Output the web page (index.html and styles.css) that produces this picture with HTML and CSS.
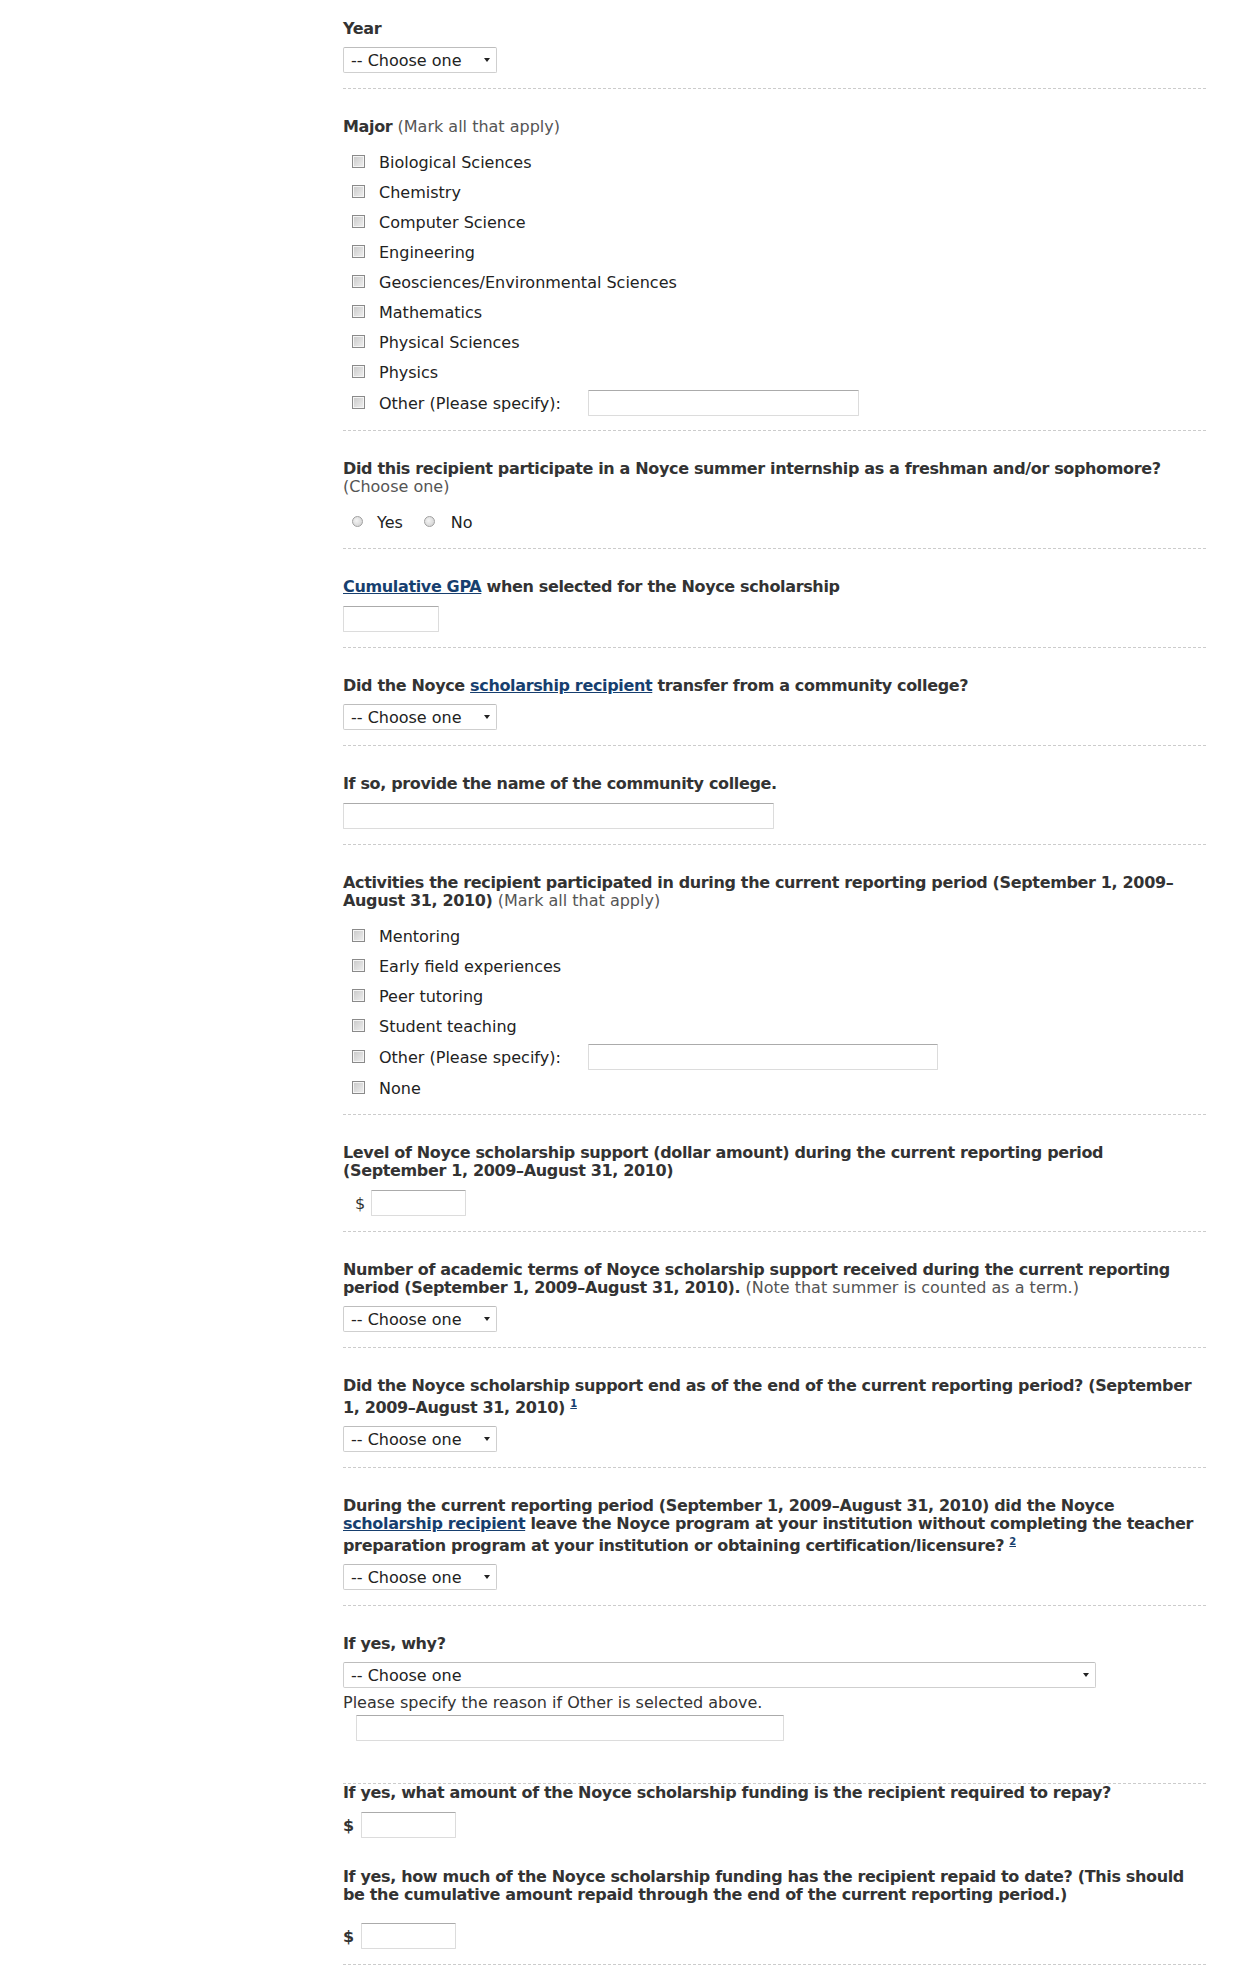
FILE: index.html
```html
<!DOCTYPE html>
<html lang="en">
<head>
  <meta charset="UTF-8">
  <title>Noyce scholarship recipient</title>
  <link rel="stylesheet" href="styles.css">
</head>
<body>
  <form class="survey">
    <div class="field first">
      <div class="label">Year</div>
      <div class="select"><select><option>-- Choose one</option></select></div>
    </div>

    <div class="field list">
      <div class="label">Major <span class="hint">(Mark all that apply)</span></div>
      <div class="options">
        <label class="option"><input type="checkbox"> Biological Sciences</label>
        <label class="option"><input type="checkbox"> Chemistry</label>
        <label class="option"><input type="checkbox"> Computer Science</label>
        <label class="option"><input type="checkbox"> Engineering</label>
        <label class="option"><input type="checkbox"> Geosciences/Environmental Sciences</label>
        <label class="option"><input type="checkbox"> Mathematics</label>
        <label class="option"><input type="checkbox"> Physical Sciences</label>
        <label class="option"><input type="checkbox"> Physics</label>
        <label class="option other"><input type="checkbox"> Other (Please specify): <input type="text" class="text major-other"></label>
      </div>
    </div>

    <div class="field list">
      <div class="label">Did this recipient participate in a Noyce summer internship as a freshman and/or sophomore?<br><span class="hint">(Choose one)</span></div>
      <div class="options">
        <div class="option radios">
          <label><input type="radio" name="intern"> Yes</label>
          <label><input type="radio" name="intern"> No</label>
        </div>
      </div>
    </div>

    <div class="field">
      <div class="label"><a href="#">Cumulative GPA</a> when selected for the Noyce scholarship</div>
      <input type="text" class="text gpa">
    </div>

    <div class="field">
      <div class="label">Did the Noyce <a href="#">scholarship recipient</a> transfer from a community college?</div>
      <div class="select"><select><option>-- Choose one</option></select></div>
    </div>

    <div class="field">
      <div class="label">If so, provide the name of the community college.</div>
      <input type="text" class="text college">
    </div>

    <div class="field list">
      <div class="label">Activities the recipient participated in during the current reporting period (September 1, 2009–August 31, 2010) <span class="hint">(Mark all that apply)</span></div>
      <div class="options">
        <label class="option"><input type="checkbox"> Mentoring</label>
        <label class="option"><input type="checkbox"> Early field experiences</label>
        <label class="option"><input type="checkbox"> Peer tutoring</label>
        <label class="option"><input type="checkbox"> Student teaching</label>
        <label class="option other"><input type="checkbox"> Other (Please specify): <input type="text" class="text activity-other"></label>
        <label class="option"><input type="checkbox"> None</label>
      </div>
    </div>

    <div class="field">
      <div class="label">Level of Noyce scholarship support (dollar amount) during the current reporting period (September 1, 2009–August 31, 2010)</div>
      <div class="money indented"><span>$</span><input type="text" class="text dollars"></div>
    </div>

    <div class="field">
      <div class="label">Number of academic terms of Noyce scholarship support received during the current reporting period (September 1, 2009–August 31, 2010). <span class="hint">(Note that summer is counted as a term.)</span></div>
      <div class="select"><select><option>-- Choose one</option></select></div>
    </div>

    <div class="field">
      <div class="label">Did the Noyce scholarship support end as of the end of the current reporting period? (September 1, 2009–August 31, 2010) <sup><a href="#">1</a></sup></div>
      <div class="select"><select><option>-- Choose one</option></select></div>
    </div>

    <div class="field">
      <div class="label">During the current reporting period (September 1, 2009–August 31, 2010) did the Noyce <a href="#">scholarship recipient</a> leave the Noyce program at your institution without completing the teacher preparation program at your institution or obtaining certification/licensure? <sup><a href="#">2</a></sup></div>
      <div class="select"><select><option>-- Choose one</option></select></div>
    </div>

    <div class="field why">
      <div class="label">If yes, why?</div>
      <div class="select wide"><select><option>-- Choose one</option></select></div>
      <div class="note">Please specify the reason if Other is selected above.</div>
      <input type="text" class="text reason">
    </div>

    <div class="field repay">
      <div class="label">If yes, what amount of the Noyce scholarship funding is the recipient required to repay?</div>
      <div class="money"><b>$</b><input type="text" class="text dollars"></div>
    </div>

    <div class="field repaid">
      <div class="label">If yes, how much of the Noyce scholarship funding has the recipient repaid to date? (This should be the cumulative amount repaid through the end of the current reporting period.)</div>
      <div class="money"><b>$</b><input type="text" class="text dollars"></div>
    </div>
  </form>
</body>
</html>
```

FILE: styles.css
```css
body {
  margin: 0;
  background: #fff;
  color: #333;
  font-family: "DejaVu Sans", Verdana, sans-serif;
  font-size: 16px;
}
.survey {
  margin-left: 343px;
  width: 863px;
}
.field {
  padding: 29px 0 15px;
  border-bottom: 1px dashed #ccc;
}
.field.first { padding-top: 20px; }
.field.list { padding-bottom: 11px; }
.label {
  font-weight: bold;
  line-height: 18px;
  letter-spacing: -0.35px;
  color: #333;
}
.label .hint {
  font-weight: normal;
  letter-spacing: 0;
  color: #555;
}
.label sup {
  font-size: 10px;
  line-height: 18px;
  vertical-align: 6px;
}
a { color: #173f6f; }

/* selects */
.select {
  position: relative;
  width: 154px;
  margin-top: 9px;
}
.select.wide { width: 753px; }
.select select {
  display: block;
  width: 100%;
  height: 26px;
  box-sizing: border-box;
  -webkit-appearance: none;
  appearance: none;
  border: 1px solid #cfcfcf;
  border-top-color: #bdbdbd;
  border-radius: 2px;
  background: #fff;
  color: #222;
  font: inherit;
  padding: 0 0 0 7px;
}
.select::after {
  content: "";
  position: absolute;
  right: 7px;
  top: 11px;
  border-left: 3.5px solid transparent;
  border-right: 3.5px solid transparent;
  border-top: 4px solid #222;
}

/* text boxes */
.text {
  display: block;
  height: 26px;
  box-sizing: border-box;
  margin: 10px 0 0;
  border: 1px solid #dcdcdc;
  border-top-color: #ababab;
  border-radius: 1px;
  background: #fff;
  font: inherit;
}
.gpa { width: 96px; }
.college { width: 431px; }
.dollars { width: 95px; margin: 0; }
.reason { width: 428px; margin: 3px 0 0 13px; }

/* checkbox / radio lists */
.options { margin-top: 11px; }
.option {
  display: flex;
  align-items: center;
  height: 30px;
  color: #222;
}
.option.other { height: 32px; }
.option .text { margin: 0 0 0 27px; }
.major-other { width: 271px; }
.activity-other { width: 350px; }
.radios label {
  display: flex;
  align-items: center;
}
.radios label + label input { margin-left: 21px; margin-right: 16px; }

input[type=checkbox],
input[type=radio] {
  -webkit-appearance: none;
  appearance: none;
  margin: -2px 14px 0 9px;
  box-sizing: border-box;
}
input[type=checkbox] {
  width: 13px;
  height: 13px;
  border: 1px solid #8a8a8a;
  background: linear-gradient(135deg, #c8c8c8, #f0f0f0);
  box-shadow: inset 0 0 0 1px #f5f5f5;
}
input[type=radio] {
  width: 11px;
  height: 11px;
  border: 1px solid #a0a0a0;
  border-radius: 50%;
  background: radial-gradient(circle at 40% 40%, #f4f4f4, #cdcdcd);
}

/* money rows */
.money {
  display: flex;
  align-items: center;
  margin-top: 10px;
}
.money span { margin: 0 6px 0 12px; }
.money b { margin: 0 7px 0 0; }

.note {
  margin-top: 6px;
  line-height: 18px;
}
.field.why { padding-bottom: 42px; }
.field.repay {
  padding: 0 0 30px;
  border-bottom: none;
}
.field.repay .money { margin-top: 10px; }
.field.repaid { padding-top: 0; }
.field.repaid .money { margin-top: 19px; }
```
